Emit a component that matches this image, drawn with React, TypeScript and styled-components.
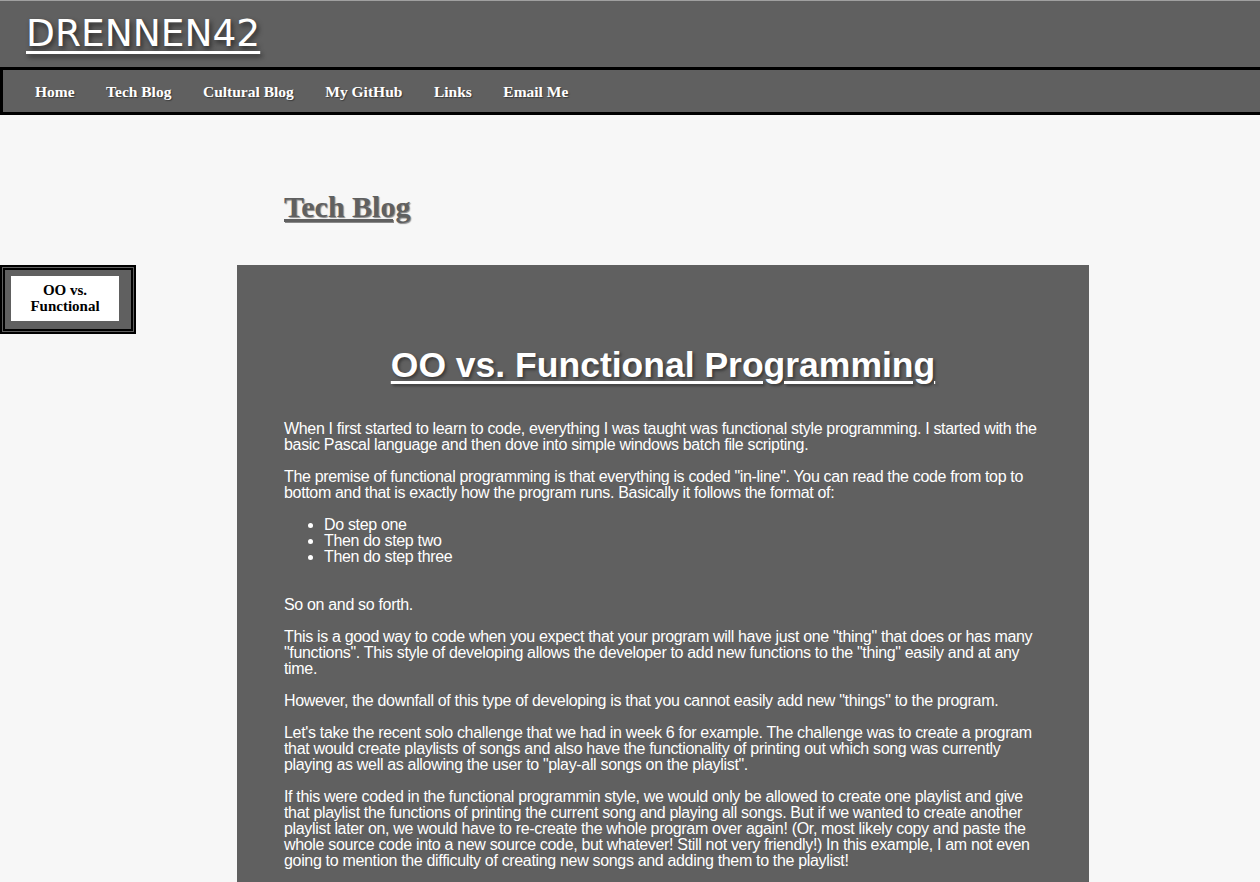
import React from "react";
import styled, { createGlobalStyle } from "styled-components";

const Global = createGlobalStyle`
  html, body { margin: 0; padding: 0; background: #f7f7f7; }
  body { font-family: "Liberation Serif", serif; overflow: hidden; }
`;

const Header = styled.header`
  background: #606060;
  border-top: 1px solid #a0a0a0;
  height: 67px;
  box-sizing: border-box;
  padding: 8px 0 0 26px;
`;

const Logo = styled.a`
  font-family: "DejaVu Sans", Verdana, sans-serif;
  font-size: 37.5px;
  letter-spacing: 0;
  color: #ffffff;
  text-decoration: underline;
  text-decoration-thickness: 3px;
  text-underline-offset: 5px;
  text-shadow: 2px 3px 5px #2a2a2a;
  line-height: 48px;
`;

const Nav = styled.nav`
  background: #606060;
  border: 3px solid #000;
  border-right: none;
  height: 40px;
  display: flex;
  align-items: center;
  gap: 31.5px;
  padding: 2px 0 0 32px;
`;

const NavLink = styled.a`
  font-family: "Liberation Serif", serif;
  font-weight: bold;
  font-size: 15.5px;
  color: #ffffff;
  text-decoration: none;
  text-shadow: 1px 1px 1px #3a3a3a;
`;

const Body = styled.div`
  display: flex;
  align-items: flex-start;
  padding-top: 150px;
`;

const Sidebar = styled.aside`
  width: 136px;
  box-sizing: border-box;
  border: 5px double #000;
  background: #606060;
  padding: 6px 12px 8px 6px;
`;

const SideItem = styled.div`
  width: 108px;
  box-sizing: border-box;
  background: #fff;
  color: #000;
  font-family: "Liberation Serif", serif;
  font-weight: bold;
  font-size: 15px;
  line-height: 16px;
  text-align: center;
  padding: 6px 2px 7px;
`;

const Main = styled.main`
  margin-left: 101px;
  width: 852px;
  margin-top: -75px;
`;

const PageTitle = styled.h1`
  font-family: "Liberation Serif", serif;
  font-weight: bold;
  font-size: 30px;
  color: #606060;
  text-decoration: underline;
  text-decoration-thickness: 3px;
  text-shadow: 1px 1px 1px #8a8a8a;
  margin: 0 0 41px 47px;
  line-height: 34px;
`;

const Card = styled.article`
  background: #606060;
  color: #ffffff;
  padding: 81px 47px 40px;
  min-height: 640px;
  font-family: "Liberation Sans", Arial, sans-serif;
  font-size: 16px;
  letter-spacing: -0.33px;
  line-height: 16px;
`;

const PostTitle = styled.h2`
  font-family: "Liberation Sans", Arial, sans-serif;
  font-weight: bold;
  font-size: 35.5px;
  letter-spacing: 0;
  line-height: 38px;
  text-align: center;
  text-decoration: underline;
  text-decoration-thickness: 3px;
  text-underline-offset: 4px;
  text-shadow: 2px 2px 3px #3a3a3a;
  margin: 0 0 37px;
`;

const P = styled.p`
  margin: 0 0 16px;
`;

const List = styled.ul`
  margin: 0 0 32px;
  padding-left: 40px;
`;

const posts = [
  "When I first started to learn to code, everything I was taught was functional style programming. I started with the basic Pascal language and then dove into simple windows batch file scripting.",
  "The premise of functional programming is that everything is coded \"in-line\". You can read the code from top to bottom and that is exactly how the program runs. Basically it follows the format of:",
];

const after = [
  "So on and so forth.",
  "This is a good way to code when you expect that your program will have just one \"thing\" that does or has many \"functions\". This style of developing allows the developer to add new functions to the \"thing\" easily and at any time.",
  "However, the downfall of this type of developing is that you cannot easily add new \"things\" to the program.",
  "Let's take the recent solo challenge that we had in week 6 for example. The challenge was to create a program that would create playlists of songs and also have the functionality of printing out which song was currently playing as well as allowing the user to \"play-all songs on the playlist\".",
  "If this were coded in the functional programmin style, we would only be allowed to create one playlist and give that playlist the functions of printing the current song and playing all songs. But if we wanted to create another playlist later on, we would have to re-create the whole program over again! (Or, most likely copy and paste the whole source code into a new source code, but whatever! Still not very friendly!) In this example, I am not even going to mention the difficulty of creating new songs and adding them to the playlist!",
];

export default function App() {
  return (
    <>
      <Global />
      <Header>
        <Logo href="#">DRENNEN42</Logo>
      </Header>
      <Nav>
        {["Home", "Tech Blog", "Cultural Blog", "My GitHub", "Links", "Email Me"].map((l) => (
          <NavLink key={l} href="#">{l}</NavLink>
        ))}
      </Nav>
      <Body>
        <Sidebar>
          <SideItem>OO vs.<br />Functional</SideItem>
        </Sidebar>
        <Main>
          <PageTitle>Tech Blog</PageTitle>
          <Card>
            <PostTitle>OO vs. Functional Programming</PostTitle>
            {posts.map((t, i) => <P key={i}>{t}</P>)}
            <List>
              <li>Do step one</li>
              <li>Then do step two</li>
              <li>Then do step three</li>
            </List>
            {after.map((t, i) => <P key={i}>{t}</P>)}
          </Card>
        </Main>
      </Body>
    </>
  );
}
